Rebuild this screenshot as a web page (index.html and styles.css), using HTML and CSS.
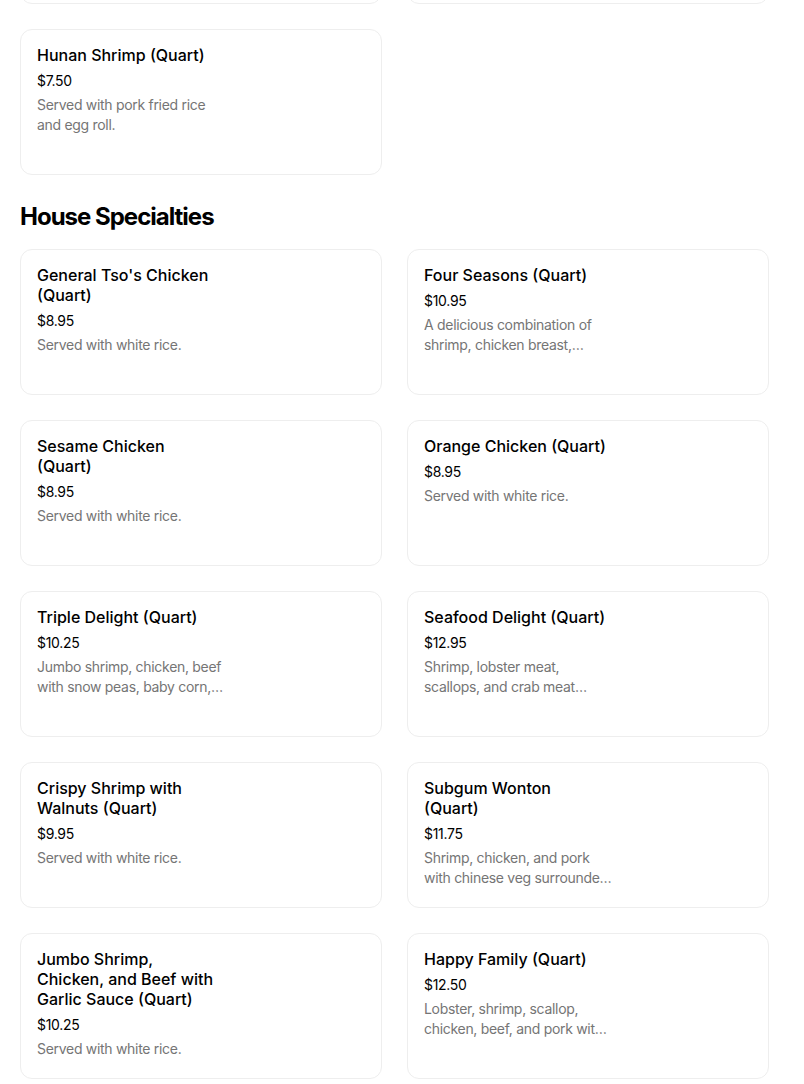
FILE: index.html
```html
<!DOCTYPE html>
<html lang="en">
<head>
<meta charset="utf-8">
<title>Menu</title>
<link rel="stylesheet" href="styles.css">
</head>
<body>
<main class="menu">
  <section class="section section-prev">
    <div class="grid">
      <div class="card"></div>
      <div class="card"></div>
      <div class="card">
        <div class="info">
          <div class="title">Hunan Shrimp (Quart)</div>
          <div class="price">$7.50</div>
          <div class="desc">Served with pork fried rice and egg roll.</div>
        </div>
      </div>
    </div>
  </section>

  <section class="section">
    <h2 class="section-title">House Specialties</h2>
    <div class="grid">
      <div class="card">
        <div class="info">
          <div class="title">General Tso's Chicken (Quart)</div>
          <div class="price">$8.95</div>
          <div class="desc">Served with white rice.</div>
        </div>
      </div>
      <div class="card">
        <div class="info">
          <div class="title">Four Seasons (Quart)</div>
          <div class="price">$10.95</div>
          <div class="desc">A delicious combination of shrimp, chicken breast,<br>beef and roast pork with mixed vegetables in brown sauce.</div>
        </div>
      </div>
      <div class="card">
        <div class="info">
          <div class="title">Sesame Chicken (Quart)</div>
          <div class="price">$8.95</div>
          <div class="desc">Served with white rice.</div>
        </div>
      </div>
      <div class="card">
        <div class="info">
          <div class="title">Orange Chicken (Quart)</div>
          <div class="price">$8.95</div>
          <div class="desc">Served with white rice.</div>
        </div>
      </div>
      <div class="card">
        <div class="info">
          <div class="title">Triple Delight (Quart)</div>
          <div class="price">$10.25</div>
          <div class="desc">Jumbo shrimp, chicken, beef with snow peas, baby corn, broccoli and mushrooms in brown sauce.</div>
        </div>
      </div>
      <div class="card">
        <div class="info">
          <div class="title">Seafood Delight (Quart)</div>
          <div class="price">$12.95</div>
          <div class="desc">Shrimp, lobster meat, scallops, and crab meat sauteed with mixed vegetables in white sauce.</div>
        </div>
      </div>
      <div class="card">
        <div class="info">
          <div class="title">Crispy Shrimp with Walnuts (Quart)</div>
          <div class="price">$9.95</div>
          <div class="desc">Served with white rice.</div>
        </div>
      </div>
      <div class="card">
        <div class="info">
          <div class="title">Subgum Wonton (Quart)</div>
          <div class="price">$11.75</div>
          <div class="desc">Shrimp, chicken, and pork with chinese veg surrounded by crispy wontons.</div>
        </div>
      </div>
      <div class="card">
        <div class="info">
          <div class="title">Jumbo Shrimp, Chicken, and Beef with Garlic Sauce (Quart)</div>
          <div class="price">$10.25</div>
          <div class="desc">Served with white rice.</div>
        </div>
      </div>
      <div class="card">
        <div class="info">
          <div class="title">Happy Family (Quart)</div>
          <div class="price">$12.50</div>
          <div class="desc">Lobster, shrimp, scallop, chicken, beef, and pork with mixed vegetables in brown sauce.</div>
        </div>
      </div>
    </div>
  </section>
</main>
</body>
</html>
```

FILE: styles.css
```css
* { box-sizing: border-box; }
html, body { margin: 0; padding: 0; background: #ffffff; }
body {
  font-family: Inter, "Noto Sans", "Liberation Sans", sans-serif;
  color: #000000;
}
.menu { padding: 0 20px; }
.section-prev { margin-top: -142px; }
.grid {
  display: grid;
  grid-template-columns: 362px 362px;
  column-gap: 25px;
  row-gap: 25px;
}
.card {
  border: 1px solid #eeeeee;
  border-radius: 12px;
  padding: 15px 16px;
  min-height: 146px;
  display: flex;
}
.info { width: 188px; }
.title {
  width: 184px;
  font-size: 16px;
  font-weight: 500;
  line-height: 20px;
  letter-spacing: 0;
}
.price {
  margin-top: 6px;
  font-size: 14px;
  line-height: 20px;
  letter-spacing: -0.3px;
}
.desc {
  margin-top: 4px;
  font-size: 14px;
  line-height: 20px;
  color: #757575;
  letter-spacing: -0.3px;
  display: -webkit-box;
  -webkit-line-clamp: 2;
  -webkit-box-orient: vertical;
  overflow: hidden;
}
.section-title {
  margin: 26px 0 16px;
  font-size: 24px;
  line-height: 32px;
  font-weight: 700;
  letter-spacing: -1px;
}
```
